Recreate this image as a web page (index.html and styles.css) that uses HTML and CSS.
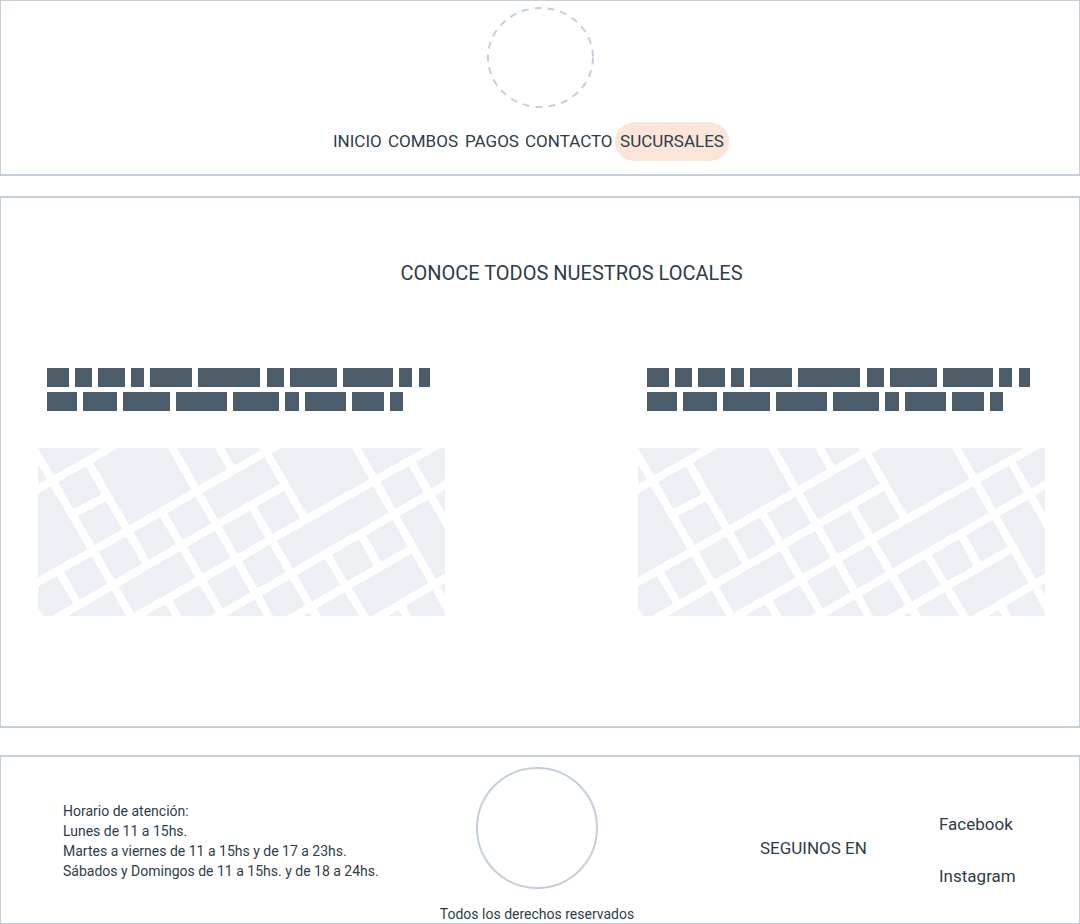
FILE: index.html
```html
<!DOCTYPE html>
<html lang="es">
<head>
<meta charset="utf-8">
<meta name="viewport" content="width=device-width, initial-scale=1">
<title>Sucursales</title>
<link rel="stylesheet" href="styles.css">
</head>
<body>
<svg class="defs" width="0" height="0" aria-hidden="true">
  <defs>
    <g id="address">
      <path d="M9 0h22v19H9zM37 0h17v19H37zM60 0h27v19H60zM93 0h13v19H93zM112 0h42v19H112zM160 0h62v19H160zM229 0h17v19H229zM252 0h47v19H252zM305 0h50v19H305zM361 0h13v19H361zM381 0h11v19H381z"/>
      <path d="M9 24h30v19H9zM45 24h34v19H45zM85 24h47v19H85zM138 24h51v19H138zM195 24h46v19H195zM247 24h14v19H247zM267 24h41v19H267zM314 24h32v19H314zM352 24h13v19H352z"/>
    </g>
    <g id="map">
      <rect class="blocks" width="407" height="168"/>
      <g class="streets">
        <path d="M-7 45L79-4M-7 138L242-4M15 172L246 38M88 174L401-4M173 172L414 33M250 172L375 100M335 172L414 126M37 65L67 49"/>
        <path d="M-7-4L96 173M50 14L109 116M132-4L233 172M179-4L194 21M125 66L187 172M129 151L142 173M22 125L40 156M213 57L281 173M224-3L267 71M316-4L414 168M372 12L414 85M323 86L341 119M288 105L329 173M363 158L372 173"/>
      </g>
      <path class="corner" d="M0 160L5 168H0z"/>
    </g>
  </defs>
</svg>

<header class="header">
  <svg class="header-logo" viewBox="0 0 107 101" aria-hidden="true">
    <ellipse cx="53.5" cy="50.5" rx="52.5" ry="49.5"/>
  </svg>
  <nav class="nav" aria-label="Principal">
    <a href="#inicio">INICIO</a>
    <a href="#combos">COMBOS</a>
    <a href="#pagos">PAGOS</a>
    <a href="#contacto">CONTACTO</a>
    <a class="active" href="#sucursales" aria-current="page">SUCURSALES</a>
  </nav>
</header>

<main class="main">
  <h1 class="title">CONOCE TODOS NUESTROS LOCALES</h1>
  <div class="stores">
    <article class="store">
      <svg class="address" viewBox="0 0 407 43" role="img" aria-label="Dirección"><use href="#address"/></svg>
      <svg class="map" viewBox="0 0 407 168" role="img" aria-label="Mapa"><use href="#map"/></svg>
    </article>
    <article class="store">
      <svg class="address" viewBox="0 0 407 43" role="img" aria-label="Dirección"><use href="#address"/></svg>
      <svg class="map" viewBox="0 0 407 168" role="img" aria-label="Mapa"><use href="#map"/></svg>
    </article>
  </div>
</main>

<footer class="footer">
  <div class="hours">
    <p>Horario de atención:</p>
    <p>Lunes de 11 a 15hs.</p>
    <p>Martes a viernes de 11 a 15hs y de 17 a 23hs.</p>
    <p>Sábados y Domingos de 11 a 15hs. y de 18 a 24hs.</p>
  </div>
  <div class="brand">
    <div class="footer-logo"></div>
    <p class="rights">Todos los derechos reservados</p>
  </div>
  <p class="follow">SEGUINOS EN</p>
  <div class="social">
    <a href="#facebook">Facebook</a>
    <a href="#instagram">Instagram</a>
  </div>
</footer>
</body>
</html>
```
FILE: styles.css
```css
* {
  box-sizing: border-box;
}

body {
  margin: 0;
  background: #fff;
  color: #2e3d49;
  font-family: Roboto, "Liberation Sans", sans-serif;
  font-size: 14px;
  line-height: 20px;
}

p,
h1 {
  margin: 0;
  font-weight: 400;
}

a {
  color: inherit;
  text-decoration: none;
}

.defs {
  position: absolute;
}

.header,
.main,
.footer {
  border: 1px solid #c3cfda;
}

.header {
  display: flex;
  flex-direction: column;
  align-items: center;
  gap: 14px;
  padding: 6px 0 13px;
  border-bottom-width: 2px;
}

.header-logo {
  width: 107px;
  height: 101px;
  fill: none;
  stroke: #c3cfda;
  stroke-width: 2px;
  stroke-dasharray: 7 6;
}

.nav {
  display: grid;
  grid-template-columns: 55px 77px 60px 90px 114px;
  margin-right: 18px;
  font-size: 17px;
  line-height: 39px;
  white-space: nowrap;
}

.active {
  border-radius: 20px;
  background: #fae5d8;
  text-align: center;
}

.main {
  margin: 20px 0 27px;
  padding: 60px 34px 110px 37px;
  border-top-width: 2px;
  border-bottom-width: 2px;
}

.title {
  padding-left: 60px;
  font-size: 20px;
  line-height: 30px;
  text-align: center;
}

.stores {
  display: grid;
  grid-template-columns: 407fr 193fr 407fr;
  margin-top: 80px;
}

.store {
  display: grid;
  gap: 37px;
}

.store:last-child {
  grid-column: 3;
}

.address,
.map {
  display: block;
  width: 100%;
}

.address {
  fill: #4b5c6b;
}

.blocks {
  fill: #eceff4;
}

.streets {
  fill: none;
  stroke: #fff;
  stroke-width: 8px;
}

.corner {
  fill: #fff;
}

.footer {
  display: grid;
  grid-template-columns: 374fr 200fr 123fr 179fr 140fr;
  padding: 10px 0 0 62px;
  border-top-width: 2px;
  white-space: nowrap;
}

.hours {
  padding-top: 34px;
}

.brand {
  display: flex;
  flex-direction: column;
  align-items: center;
  gap: 16px;
}

.footer-logo {
  width: 122px;
  height: 122px;
  border: 2px solid #c3cfda;
  border-radius: 50%;
}

.rights {
  line-height: 18px;
}

.follow {
  grid-column: 4;
  padding-top: 71px;
  font-size: 17px;
}

.social {
  display: flex;
  flex-direction: column;
  align-items: flex-start;
  gap: 32px;
  padding-top: 47px;
  font-size: 17px;
}
```
